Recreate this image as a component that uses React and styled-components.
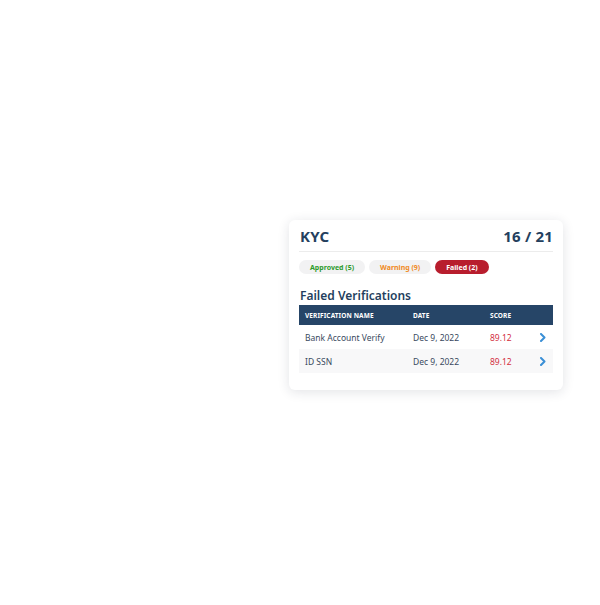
import React from "react";
import styled, { createGlobalStyle } from "styled-components";

const GlobalStyle = createGlobalStyle`
  html, body {
    margin: 0;
    padding: 0;
    background: #ffffff;
    font-family: "Noto Sans", "Open Sans", sans-serif;
  }
`;

const rows = [
  { name: "Bank Account Verify", date: "Dec 9, 2022", score: "89.12" },
  { name: "ID SSN", date: "Dec 9, 2022", score: "89.12" },
];

const App = () => {
  return (
    <Page>
      <GlobalStyle />
      <Card>
        <Header>
          <Title>KYC</Title>
          <Title>16 / 21</Title>
        </Header>
        <Pills>
          <Pill $color="#2e9b2e">Approved (5)</Pill>
          <Pill $color="#f08a24">Warning (9)</Pill>
          <Pill $color="#ffffff" $bg="#b81d2d">
            Failed (2)
          </Pill>
        </Pills>
        <SectionTitle>Failed Verifications</SectionTitle>
        <Table>
          <HeadRow>
            <HeadCell>Verification Name</HeadCell>
            <HeadCell>Date</HeadCell>
            <HeadCell>Score</HeadCell>
            <HeadCell />
          </HeadRow>
          {rows.map((r, i) => (
            <Row key={i} $striped={i % 2 === 1}>
              <Cell>{r.name}</Cell>
              <Cell>{r.date}</Cell>
              <Score>{r.score}</Score>
              <Chevron>
                <svg width="8" height="9" viewBox="0 0 8 9">
                  <path
                    d="M2 1 L5.5 4.5 L2 8"
                    fill="none"
                    stroke="#3a8fd6"
                    strokeWidth="2"
                    strokeLinecap="round"
                    strokeLinejoin="round"
                  />
                </svg>
              </Chevron>
            </Row>
          ))}
        </Table>
      </Card>
    </Page>
  );
};

export default App;

const Page = styled.div`
  width: 600px;
  height: 605px;
  display: flex;
  padding: 220px 0 0 289px;
  box-sizing: border-box;
`;

const Card = styled.section`
  width: 274px;
  height: 170px;
  box-sizing: border-box;
  background: #ffffff;
  border-radius: 6px;
  box-shadow: 0 2px 12px rgba(30, 40, 60, 0.13);
  padding: 4px 10px 0 10px;
  display: flex;
  flex-direction: column;
`;

const Header = styled.header`
  display: flex;
  justify-content: space-between;
  align-items: center;
  height: 27px;
  box-sizing: content-box;
  border-bottom: 1px solid #ececec;
  padding: 0 0 0 1px;
`;

const Title = styled.h2`
  margin: 0 0 4px 0;
  font-size: 15px;
  font-weight: 700;
  color: #243f5e;
  letter-spacing: 0.2px;
`;

const Pills = styled.div`
  display: flex;
  gap: 4px;
  margin-top: 8px;
`;

const Pill = styled.span`
  display: inline-flex;
  align-items: center;
  height: 14px;
  padding: 0 11px;
  border-radius: 7px;
  background: ${(p) => p.$bg || "#f2f2f3"};
  color: ${(p) => p.$color};
  font-size: 7px;
  font-weight: 700;
`;

const SectionTitle = styled.h3`
  margin: 13px 0 1px 1px;
  font-size: 12px;
  font-weight: 600;
  color: #243f5e;
`;

const Table = styled.div`
  display: flex;
  flex-direction: column;
`;

const grid = `
  display: grid;
  grid-template-columns: 108px 77px 48px 1fr;
  align-items: center;
  padding-left: 6px;
`;

const HeadRow = styled.div`
  ${grid}
  height: 20px;
  background: #264567;
`;

const HeadCell = styled.span`
  font-size: 6.5px;
  font-weight: 700;
  color: #ffffff;
  text-transform: uppercase;
  letter-spacing: 0.1px;
`;

const Row = styled.div`
  ${grid}
  height: 24px;
  background: ${(p) => (p.$striped ? "#f8f8f9" : "#ffffff")};
`;

const Cell = styled.span`
  font-size: 8.5px;
  color: #3a4a60;
`;

const Score = styled(Cell)`
  color: #d3303f;
`;

const Chevron = styled.span`
  display: flex;
  align-items: center;
  padding-left: 1px;
`;
